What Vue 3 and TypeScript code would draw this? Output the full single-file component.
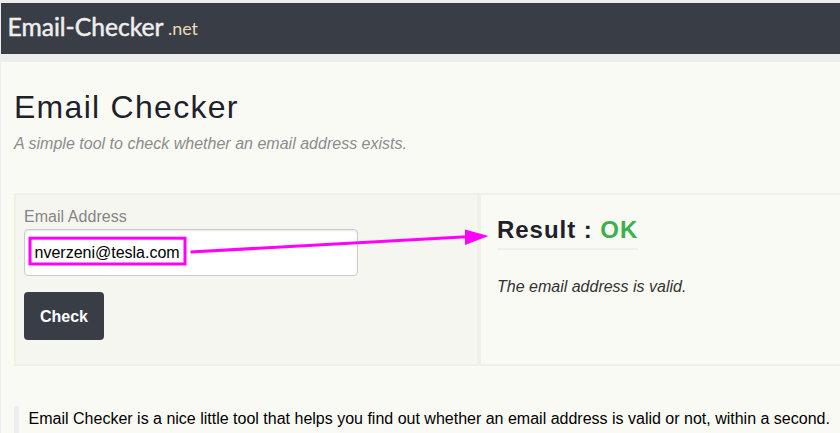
<script setup lang="ts">
import { ref } from 'vue'

const email = ref<string>('nverzeni@tesla.com')
const status = ref<string>('OK')
</script>

<template>
  <div class="page">
    <header class="topbar">
      <svg class="logo" width="200" height="51" role="img" aria-label="Email-Checker .net">
        <text class="logo-name" x="6.500" y="33" textLength="156" lengthAdjust="spacingAndGlyphs">Email-Checker</text>
        <text class="logo-tld" x="167" y="32" textLength="30" lengthAdjust="spacingAndGlyphs">.net</text>
      </svg>
    </header>
    <main class="content">
      <h1>Email Checker</h1>
      <p class="tagline">A simple tool to check whether an email address exists.</p>
      <div class="panels">
        <form class="panel form" @submit.prevent>
          <label for="email">Email Address</label>
          <input id="email" v-model="email" type="text" spellcheck="false" />
          <button type="submit">Check</button>
        </form>
        <section class="panel result">
          <h2>Result : <span class="ok">{{ status }}</span></h2>
          <p>The email address is valid.</p>
        </section>
      </div>
      <blockquote>Email Checker is a nice little tool that helps you find out whether an email address is valid or not, within a second.</blockquote>
    </main>
    <svg class="annotation" width="840" height="433" aria-hidden="true">
      <rect x="30" y="238.200" width="155" height="25.800" fill="none" stroke="#ff00ff" stroke-width="3" />
      <path d="M190.500 252L467 236.700" stroke="#ff00ff" stroke-width="3" />
      <path d="M465 229.500L488.500 236L465 245Z" fill="#ff00ff" />
    </svg>
  </div>
</template>

<style>
body {
  margin: 0;
  overflow: hidden;
}
</style>

<style scoped>
.page {
  position: relative;
  box-sizing: border-box;
  width: 840px;
  height: 433px;
  padding: 3px 0 0 1px;
  overflow: hidden;
  background: #ededed;
  font-family: "Liberation Sans", Arial, sans-serif;
  font-size: 16px;
}
.topbar {
  height: 51px;
  background: #393d46;
}
.logo {
  display: block;
}
.logo-name {
  font: 400 25px Lato, sans-serif;
  fill: #eeeeee;
  stroke: #eeeeee;
  stroke-width: 0.5px;
  stroke-linejoin: round;
}
.logo-tld {
  font: 400 17px Lato, sans-serif;
  fill: #eadbb5;
}
.content {
  margin-top: 8px;
  height: 371px;
  padding: 26px 0 0 13px;
  box-sizing: border-box;
  background: #fafaf5;
}
h1 {
  margin: 0;
  height: 38px;
  font-size: 32px;
  line-height: 38px;
  font-weight: 400;
  letter-spacing: 1.28px;
  color: #1e2129;
}
.tagline {
  margin: 8px 0 0;
  line-height: 20px;
  font-style: italic;
  letter-spacing: 0.01px;
  color: #8c8c8c;
}
.panels {
  display: flex;
  width: 840px;
  height: 173px;
  margin-top: 39px;
}
.panel {
  box-sizing: border-box;
  border: 2px solid #f0f0e6;
}
.form {
  display: flex;
  flex-direction: column;
  align-items: flex-start;
  width: 465px;
  padding: 12px 8px 0;
  background: #f6f6f1;
}
label {
  line-height: 20px;
  letter-spacing: 0.04px;
  color: #858585;
}
input {
  box-sizing: border-box;
  width: 334px;
  height: 47px;
  margin: 2px 0 16px;
  padding: 0 9.500px;
  border: 1px solid #cccccc;
  border-radius: 4px;
  background: #ffffff;
  box-shadow: inset 0 1px 2px rgba(0, 0, 0, 0.1);
  font: inherit;
  color: #000000;
}
button {
  width: 80px;
  height: 48px;
  padding: 2px 0 0;
  border: 0;
  border-radius: 4px;
  background: #393d46;
  color: #ffffff;
  font: bold 16px "Liberation Sans", Arial, sans-serif;
}
.result {
  width: 375px;
  padding: 18px 16px;
}
h2 {
  display: inline-block;
  margin: 0;
  padding-bottom: 1px;
  border-bottom: 2px solid #eeeeee;
  font-size: 24px;
  line-height: 34px;
  letter-spacing: 0.96px;
  color: #1e2129;
}
.ok {
  color: #3bb04b;
}
.result p {
  margin: 27px 0 0;
  line-height: 20px;
  font-style: italic;
  color: #333333;
}
blockquote {
  height: 27px;
  box-sizing: border-box;
  margin: 40px 0 0;
  padding-left: 9.600px;
  border-left: 5px solid #eeeeee;
  line-height: 25px;
  white-space: nowrap;
  color: #000000;
}
.annotation {
  position: absolute;
  inset: 0;
  pointer-events: none;
}
</style>
